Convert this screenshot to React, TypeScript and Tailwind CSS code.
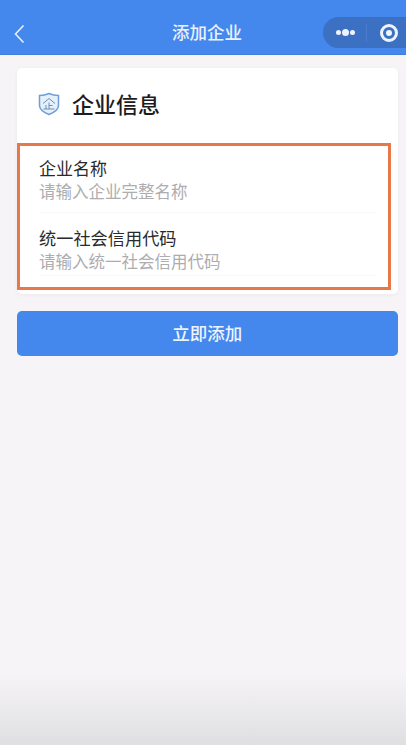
const font = { fontFamily: '"Noto Sans CJK SC", "Liberation Sans", sans-serif' };

const App = () => {
  return (
    <div
      className="relative h-[745px] w-[406px] overflow-hidden bg-[#f6f4f7]"
      style={font}
    >
      {/* Top bar */}
      <div className="flex h-[55px] items-center justify-between border-b border-[#3f7fdc] bg-[#4487ed] pt-[11px]">
        <svg width="12" height="20" viewBox="0 0 12 20" className="ml-[13px] mt-[2px]" fill="none">
          <path d="M10.5 1.500 2.500 10l8 8.500" stroke="#e8f0fd" strokeWidth="1.600" />
        </svg>
        <h1 className="absolute left-[8px] right-0 mb-[2px] text-center text-[17.5px] leading-6 font-medium text-[#e9f1fd]">
          添加企业
        </h1>
        <div className="flex h-[31px] w-[83px] items-center rounded-l-full bg-[#3c70c2]">
          <div className="flex w-[33px] items-center justify-end gap-[1px] pr-[1px]">
            <span className="h-[5px] w-[5px] rounded-full bg-[#eef4fd]" />
            <span className="h-[7px] w-[7px] rounded-full bg-[#eef4fd]" />
            <span className="h-[5px] w-[5px] rounded-full bg-[#eef4fd]" />
          </div>
          <span className="ml-[10px] h-[18px] w-px bg-[#4a7dcc]" />
          <span className="ml-[13px] flex h-[18px] w-[18px] items-center justify-center rounded-full border-[3px] border-[#eef4fd]">
            <span className="h-[6px] w-[6px] rounded-full bg-[#eef4fd]" />
          </span>
        </div>
      </div>

      <div className="pl-[17px] pr-[8.5px] pt-[13px]">
        {/* Info card */}
        <div className="h-[226px] rounded-[5px] bg-white shadow-[0_1px_4px_rgba(0,0,0,0.05)]">
          <div className="flex h-[75px] items-center pb-[6px] pl-[21px]">
            <svg width="22" height="24" viewBox="0 0 22 24" fill="none" className="mt-[2px]">
              <path
                d="M11 1.500c3 1.400 6 2 9.500 2v10c0 4-4.500 7-9.500 9-5-2-9.500-5-9.500-9v-10c3.500 0 6.500-.6 9.500-2Z"
                fill="#e6f0fa"
                stroke="#6d9fd8"
                strokeWidth="1.500"
              />
              <path
                d="M5 11.500 11 6.500l6 5M11 10.500v6.500M8 13V17M11 13.500h3.500M5.500 17h11"
                stroke="#6a8fbd"
                strokeWidth="1"
              />
            </svg>
            <h2 className="ml-[12px] text-[22px] leading-8 font-medium text-[#1c1c1e]">
              企业信息
            </h2>
          </div>

          {/* Highlighted fields */}
          <div className="mr-[7px] h-[147px] border-[3px] border-[#e8774a] pl-[19px] pr-[11px]">
            <div className="h-[67px] border-b border-[#f9f9f9] pt-[9px]">
              <p className="text-[17px] leading-[25px] text-[#2a2a2c]">企业名称</p>
              <p className="text-[16.5px] leading-[22px] text-[#adadb0]">请输入企业完整名称</p>
            </div>
            <div className="h-[63px] border-b border-[#f9f9f9] pt-[12px]">
              <p className="text-[17.2px] leading-[25px] text-[#2a2a2c]">统一社会信用代码</p>
              <p className="text-[16.5px] leading-[22px] text-[#adadb0]">请输入统一社会信用代码</p>
            </div>
          </div>
        </div>

        <button className="mt-[17px] h-[45px] w-full rounded-[5px] bg-[#4487ed] text-[17.5px] font-medium text-[#eef4fd]">
          立即添加
        </button>
      </div>

      {/* Bottom fade */}
      <div className="absolute bottom-0 left-0 right-0 h-[72px] bg-gradient-to-b from-[#f6f4f7] to-[#dfdfe1]" />
    </div>
  );
};

export default App;
